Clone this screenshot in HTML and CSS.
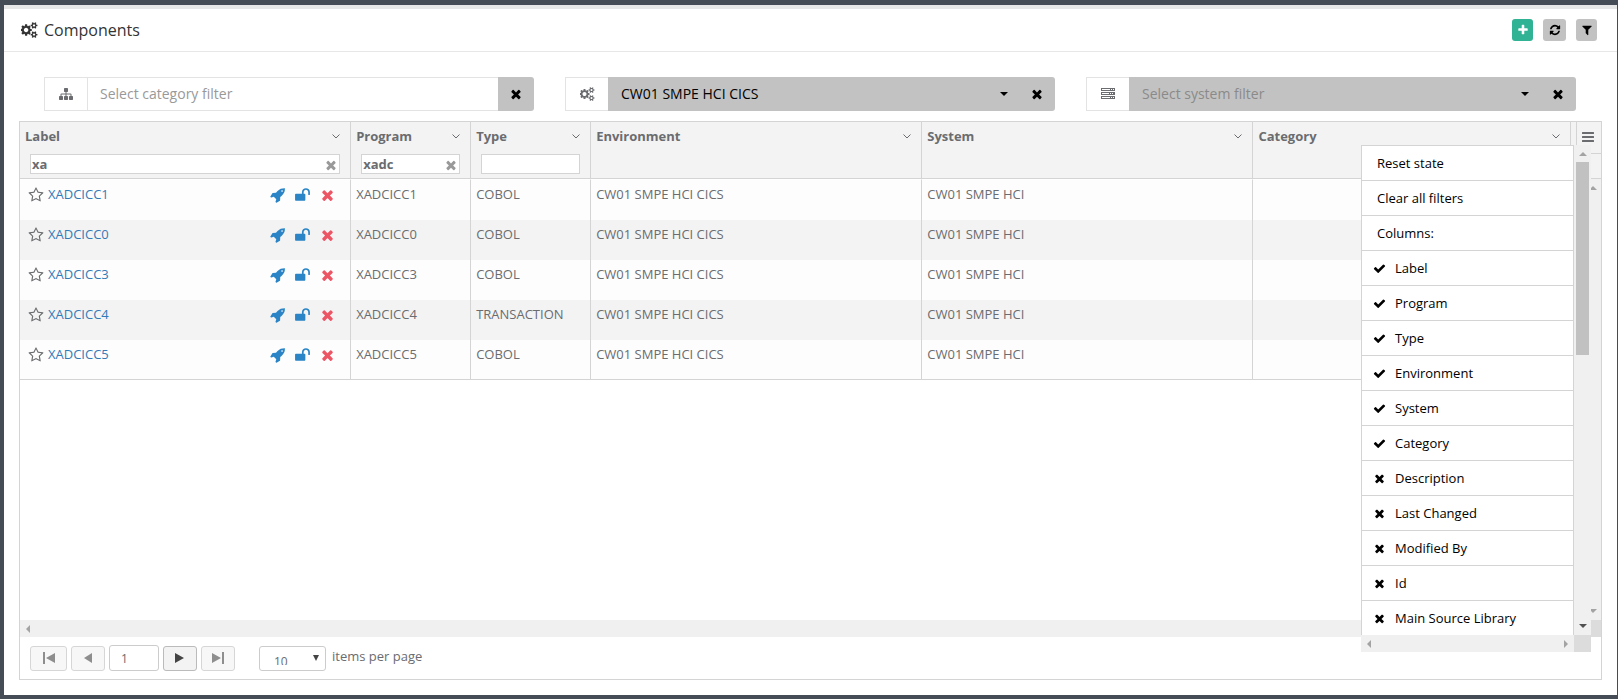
FILE: index.html
```html
<!DOCTYPE html>
<html lang="en">
<head>
<meta charset="utf-8">
<title>Components</title>
<link rel="stylesheet" href="styles.css">
</head>
<body>
<svg class="sprite" aria-hidden="true">
  <symbol id="i-cogs" viewBox="0 0 1920 1792"><path d="M832 896q0-106-75-181t-181-75-181 75-75 181 75 181 181 75 181-75 75-181zm768 512q0-52-38-90t-90-38-90 38-38 90q0 53 37.500 90.500t90.500 37.500 90.500-37.500 37.500-90.500zm0-1024q0-52-38-90t-90-38-90 38-38 90q0 53 37.500 90.500t90.500 37.500 90.500-37.500 37.500-90.500zm-384 421v185q0 10-7 19.500t-16 10.500l-155 24q-11 35-32 76 34 48 90 115 7 11 7 20 0 12-7 19-23 30-82.500 89.500t-78.500 59.500q-11 0-21-7l-115-90q-37 19-77 31-11 108-23 155-7 24-30 24h-186q-11 0-20-7.500t-10-17.500l-23-153q-34-10-75-31l-118 89q-7 7-20 7-11 0-21-8-144-133-144-160 0-9 7-19 10-14 41-53t47-61q-23-44-35-82l-152-24q-10-1-17-9.500t-7-19.500v-185q0-10 7-19.500t16-10.500l155-24q11-35 32-76-34-48-90-115-7-11-7-20 0-12 7-20 22-30 82-89t79-59q11 0 21 7l115 90q34-18 77-32 11-108 23-154 7-24 30-24h186q11 0 20 7.500t10 17.500l23 153q34 10 75 31l118-89q8-7 20-7 11 0 21 8 144 133 144 160 0 8-7 19-12 16-42 54t-45 60q23 48 34 82l152 23q10 2 17 10.500t7 19.500zm640 533v140q0 16-149 31-12 27-30 52 51 113 51 138 0 4-4 7-122 71-124 71-8 0-46-47t-52-68q-20 2-30 2t-30-2q-14 21-52 68t-46 47q-2 0-124-71-4-3-4-7 0-25 51-138-18-25-30-52-149-15-149-31v-140q0-16 149-31 13-29 30-52-51-113-51-138 0-4 4-7 4-2 35-20t59-34 30-16q8 0 46 46.500t52 67.500q20-2 30-2t30 2q51-71 92-112l6-2q4 0 124 70 4 3 4 7 0 25-51 138 17 23 30 52 149 15 149 31zm0-1024v140q0 16-149 31-12 27-30 52 51 113 51 138 0 4-4 7-122 71-124 71-8 0-46-47t-52-68q-20 2-30 2t-30-2q-14 21-52 68t-46 47q-2 0-124-71-4-3-4-7 0-25 51-138-18-25-30-52-149-15-149-31v-140q0-16 149-31 13-29 30-52-51-113-51-138 0-4 4-7 4-2 35-20t59-34 30-16q8 0 46 46.500t52 67.500q20-2 30-2t30 2q51-71 92-112l6-2q4 0 124 70 4 3 4 7 0 25-51 138 17 23 30 52 149 15 149 31z"/></symbol>
  <symbol id="i-sitemap" viewBox="0 0 1792 1792"><path d="M1792 1248v320q0 40-28 68t-68 28h-320q-40 0-68-28t-28-68v-320q0-40 28-68t68-28h96v-192h-512v192h96q40 0 68 28t28 68v320q0 40-28 68t-68 28h-320q-40 0-68-28t-28-68v-320q0-40 28-68t68-28h96v-192h-512v192h96q40 0 68 28t28 68v320q0 40-28 68t-68 28h-320q-40 0-68-28t-28-68v-320q0-40 28-68t68-28h96v-192q0-52 38-90t90-38h512v-192h-96q-40 0-68-28t-28-68v-320q0-40 28-68t68-28h320q40 0 68 28t28 68v320q0 40-28 68t-68 28h-96v192h512q52 0 90 38t38 90v192h96q40 0 68 28t28 68z"/></symbol>
  <symbol id="i-times" viewBox="0 0 1792 1792"><path d="M1490 1322q0 40-28 68l-136 136q-28 28-68 28t-68-28l-294-294-294 294q-28 28-68 28t-68-28l-136-136q-28-28-28-68t28-68l294-294-294-294q-28-28-28-68t28-68l136-136q28-28 68-28t68 28l294 294 294-294q28-28 68-28t68 28l136 136q28 28 28 68t-28 68l-294 294 294 294q28 28 28 68z"/></symbol>
  <symbol id="i-check" viewBox="0 0 1792 1792"><path d="M1671 566q0 40-28 68l-724 724-136 136q-28 28-68 28t-68-28l-136-136-362-362q-28-28-28-68t28-68l136-136q28-28 68-28t68 28l294 295 656-657q28-28 68-28t68 28l136 136q28 28 28 68z"/></symbol>
  <symbol id="i-plus" viewBox="0 0 1792 1792"><path d="M1600 736v192q0 40-28 68t-68 28h-416v416q0 40-28 68t-68 28h-192q-40 0-68-28t-28-68v-416h-416q-40 0-68-28t-28-68v-192q0-40 28-68t68-28h416v-416q0-40 28-68t68-28h192q40 0 68 28t28 68v416h416q40 0 68 28t28 68z"/></symbol>
  <symbol id="i-refresh" viewBox="0 0 1792 1792"><path d="M1639 1056q0 5-1 7-64 268-268 434.500t-478 166.500q-146 0-282.500-55t-243.500-157l-129 129q-19 19-45 19t-45-19-19-45v-448q0-26 19-45t45-19h448q26 0 45 19t19 45-19 45l-137 137q71 66 161 102t187 36q134 0 250-65t186-179q11-17 53-117 8-23 30-23h192q13 0 22.500 9.500t9.500 22.500zm25-800v448q0 26-19 45t-45 19h-448q-26 0-45-19t-19-45 19-45l138-138q-148-137-349-137-134 0-250 65t-186 179q-11 17-53 117-8 23-30 23h-199q-13 0-22.500-9.500t-9.500-22.500v-7q65-268 270-434.500t480-166.500q146 0 284 55.500t245 156.500l130-129q19-19 45-19t45 19 19 45z"/></symbol>
  <symbol id="i-filter" viewBox="0 0 1792 1792"><path d="M1595 295q17 41-14 70l-493 493v742q0 42-39 59-13 5-25 5-27 0-45-19l-256-256q-19-19-19-45v-486l-493-493q-31-29-14-70 17-39 59-39h1280q42 0 59 39z"/></symbol>
  <symbol id="i-rocket" viewBox="0 0 1792 1792"><path d="M1504 448q0-40-28-68t-68-28-68 28-28 68 28 68 68 28 68-28 28-68zm224-288q0 249-75.500 430.500t-253.500 360.500q-81 80-195 176l-20 379q-2 16-16 26l-384 224q-7 4-16 4-12 0-23-9l-64-64q-13-14-8-32l85-276-281-281-276 85q-3 1-9 1-14 0-23-9l-64-64q-17-19-5-39l224-384q10-14 26-16l379-20q96-114 176-195 188-187 358-258t431-71q14 0 24 9.500t10 22.500z"/></symbol>
  <symbol id="i-unlock" viewBox="0 0 1792 1792"><path d="M1728 576v256q0 26-19 45t-45 19h-64q-26 0-45-19t-19-45v-256q0-106-75-181t-181-75-181 75-75 181v192h96q40 0 68 28t28 68v576q0 40-28 68t-68 28h-960q-40 0-68-28t-28-68v-576q0-40 28-68t68-28h672v-192q0-185 131.500-316.500t316.500-131.500 316.500 131.500 131.500 316.500z"/></symbol>
  <symbol id="i-star" viewBox="0 0 1792 1792"><path d="M1201 1004l306-297-422-62-189-382-189 382-422 62 306 297-73 421 378-199 377 199zm527-357q0 22-26 48l-363 354 86 500q1 7 1 20 0 50-41 50-19 0-40-12l-449-236-449 236q-22 12-40 12-21 0-31.500-14.500t-10.500-35.500q0-6 2-20l86-500-364-354q-25-27-25-48 0-37 56-46l502-73 225-455q19-41 49-41t49 41l225 455 502 73q56 9 56 46z"/></symbol>
  <symbol id="i-bars" viewBox="0 0 12 10"><path d="M.5 0h11q.5 0 .5.500v1q0 .5-.5.500h-11q-.5 0-.5-.5v-1q0-.5.500-.5zM.5 4h11q.5 0 .5.500v1q0 .5-.5.500h-11q-.5 0-.5-.5v-1q0-.5.500-.5zM.5 8h11q.5 0 .5.500v1q0 .5-.5.500h-11q-.5 0-.5-.5v-1q0-.5.500-.5z"/></symbol>
  <symbol id="i-server" viewBox="0 0 14 12"><path fill-rule="evenodd" d="M0 0h14v3H0zM1 1v1h8V1zM10 1v1h1V1zM12 1v1h1V1zM0 4h14v3H0zM1 5v1h7V5zM9 5v1h1V5zM11 5v1h1V5zM0 8h14v3H0zM1 9v1h8V9zM10 9v1h1V9zM12 9v1h1V9z"/></symbol>
  <symbol id="i-chevron" viewBox="0 0 8 5"><path d="M.5.500 4 4 7.500.5" fill="none" stroke="currentColor"/></symbol>
  <symbol id="i-down" viewBox="0 0 8 4"><path d="M0 0h8L4 4z"/></symbol>
  <symbol id="i-drop" viewBox="0 0 6 6"><path d="M0 0h6L3 6z"/></symbol>
  <symbol id="i-up" viewBox="0 0 8 4"><path d="M0 4h8L4 0z"/></symbol>
  <symbol id="i-left" viewBox="0 0 4 8"><path d="M4 0v8L0 4z"/></symbol>
  <symbol id="i-right" viewBox="0 0 4 8"><path d="M0 0v8l4-4z"/></symbol>
  <symbol id="i-first" viewBox="0 0 12 12"><path d="M0 0h2v12H0zM12 1v10L3 6z"/></symbol>
  <symbol id="i-prev" viewBox="0 0 12 12"><path d="M10 1v10L2 6z"/></symbol>
  <symbol id="i-next" viewBox="0 0 12 12"><path d="M1 1v10l9-5z"/></symbol>
  <symbol id="i-last" viewBox="0 0 12 12"><path d="M10 0h2v12h-2zM0 1v10l9-5z"/></symbol>
</svg>

<main class="panel">
  <header class="panel-head">
    <h1 class="title"><svg class="icon title-icon"><use href="#i-cogs"/></svg>Components</h1>
    <div class="tools">
      <button class="tool tool-add" aria-label="Add"><svg class="icon"><use href="#i-plus"/></svg></button>
      <button class="tool tool-wide" aria-label="Refresh"><svg class="icon"><use href="#i-refresh"/></svg></button>
      <button class="tool" aria-label="Filter"><svg class="icon"><use href="#i-filter"/></svg></button>
    </div>
  </header>

  <section class="filters">
    <div class="group">
      <label class="addon" for="category" aria-label="Category filter"><svg class="icon"><use href="#i-sitemap"/></svg></label>
      <input class="group-input" id="category" type="text" placeholder="Select category filter">
      <button class="clear" aria-label="Clear category"><svg class="icon"><use href="#i-times"/></svg></button>
    </div>
    <div class="group">
      <span class="addon"><svg class="icon icon-cogs"><use href="#i-cogs"/></svg></span>
      <button class="picker"><span>CW01 SMPE HCI CICS</span><svg class="caret"><use href="#i-down"/></svg></button>
      <button class="clear" aria-label="Clear environment"><svg class="icon"><use href="#i-times"/></svg></button>
    </div>
    <div class="group">
      <span class="addon"><svg class="icon-server"><use href="#i-server"/></svg></span>
      <button class="picker picker-empty"><span>Select system filter</span><svg class="caret"><use href="#i-down"/></svg></button>
      <button class="clear" aria-label="Clear system"><svg class="icon"><use href="#i-times"/></svg></button>
    </div>
  </section>

  <section class="grid">
    <div class="viewport">
      <div class="table-area">
        <table class="table">
          <colgroup><col class="col-wide"><col class="col-narrow"><col class="col-narrow"><col class="col-wide"><col class="col-wide"><col></colgroup>
          <thead>
            <tr>
              <th><div class="th-top">Label<svg class="chevron"><use href="#i-chevron"/></svg></div><div class="th-filter"><input type="text" value="xa" aria-label="Filter label"><button class="th-clear" aria-label="Clear"><svg class="icon"><use href="#i-times"/></svg></button></div></th>
              <th><div class="th-top">Program<svg class="chevron"><use href="#i-chevron"/></svg></div><div class="th-filter"><input type="text" value="xadc" aria-label="Filter program"><button class="th-clear" aria-label="Clear"><svg class="icon"><use href="#i-times"/></svg></button></div></th>
              <th><div class="th-top">Type<svg class="chevron"><use href="#i-chevron"/></svg></div><div class="th-filter"><input type="text" aria-label="Filter type"></div></th>
              <th><div class="th-top">Environment<svg class="chevron"><use href="#i-chevron"/></svg></div></th>
              <th><div class="th-top">System<svg class="chevron"><use href="#i-chevron"/></svg></div></th>
              <th><div class="th-top">Category<svg class="chevron"><use href="#i-chevron"/></svg></div></th>
            </tr>
          </thead>
          <tbody>
            <tr><td><div class="label-cell"><svg class="star"><use href="#i-star"/></svg><a href="#">XADCICC1</a><span class="acts"><svg class="act"><use href="#i-rocket"/></svg><svg class="act"><use href="#i-unlock"/></svg><svg class="act act-del"><use href="#i-times"/></svg></span></div></td><td>XADCICC1</td><td>COBOL</td><td>CW01 SMPE HCI CICS</td><td>CW01 SMPE HCI</td><td></td></tr>
            <tr><td><div class="label-cell"><svg class="star"><use href="#i-star"/></svg><a href="#">XADCICC0</a><span class="acts"><svg class="act"><use href="#i-rocket"/></svg><svg class="act"><use href="#i-unlock"/></svg><svg class="act act-del"><use href="#i-times"/></svg></span></div></td><td>XADCICC0</td><td>COBOL</td><td>CW01 SMPE HCI CICS</td><td>CW01 SMPE HCI</td><td></td></tr>
            <tr><td><div class="label-cell"><svg class="star"><use href="#i-star"/></svg><a href="#">XADCICC3</a><span class="acts"><svg class="act"><use href="#i-rocket"/></svg><svg class="act"><use href="#i-unlock"/></svg><svg class="act act-del"><use href="#i-times"/></svg></span></div></td><td>XADCICC3</td><td>COBOL</td><td>CW01 SMPE HCI CICS</td><td>CW01 SMPE HCI</td><td></td></tr>
            <tr><td><div class="label-cell"><svg class="star"><use href="#i-star"/></svg><a href="#">XADCICC4</a><span class="acts"><svg class="act"><use href="#i-rocket"/></svg><svg class="act"><use href="#i-unlock"/></svg><svg class="act act-del"><use href="#i-times"/></svg></span></div></td><td>XADCICC4</td><td>TRANSACTION</td><td>CW01 SMPE HCI CICS</td><td>CW01 SMPE HCI</td><td></td></tr>
            <tr><td><div class="label-cell"><svg class="star"><use href="#i-star"/></svg><a href="#">XADCICC5</a><span class="acts"><svg class="act"><use href="#i-rocket"/></svg><svg class="act"><use href="#i-unlock"/></svg><svg class="act act-del"><use href="#i-times"/></svg></span></div></td><td>XADCICC5</td><td>COBOL</td><td>CW01 SMPE HCI CICS</td><td>CW01 SMPE HCI</td><td></td></tr>
          </tbody>
        </table>
      </div>
      <div class="gutter">
        <div class="gutter-head"><button class="menu-button" aria-label="Grid menu"><svg class="bars"><use href="#i-bars"/></svg></button></div>
        <div class="vbar"><svg class="tri-v"><use href="#i-up"/></svg><svg class="tri-v"><use href="#i-down"/></svg></div>
      </div>
    </div>
    <div class="hbar-row"><div class="hbar"><svg class="tri-h"><use href="#i-left"/></svg></div><div class="corner"></div></div>

    <footer class="pager">
      <button class="page-btn page-btn-first" disabled aria-label="First page"><svg><use href="#i-first"/></svg></button>
      <button class="page-btn" disabled aria-label="Previous page"><svg><use href="#i-prev"/></svg></button>
      <input class="page-input" type="text" value="1" aria-label="Page">
      <button class="page-btn" aria-label="Next page"><svg><use href="#i-next"/></svg></button>
      <button class="page-btn" disabled aria-label="Last page"><svg><use href="#i-last"/></svg></button>
      <span class="size-wrap"><select class="page-size" id="size"><option>10</option></select><svg class="size-arrow"><use href="#i-drop"/></svg></span>
      <label class="size-label" for="size">items per page</label>
    </footer>

    <div class="menu">
      <ul class="menu-list">
        <li><button class="item item-plain">Reset state</button></li>
        <li><button class="item item-plain">Clear all filters</button></li>
        <li><button class="item item-plain">Columns:</button></li>
        <li><button class="item"><svg class="icon"><use href="#i-check"/></svg>Label</button></li>
        <li><button class="item"><svg class="icon"><use href="#i-check"/></svg>Program</button></li>
        <li><button class="item"><svg class="icon"><use href="#i-check"/></svg>Type</button></li>
        <li><button class="item"><svg class="icon"><use href="#i-check"/></svg>Environment</button></li>
        <li><button class="item"><svg class="icon"><use href="#i-check"/></svg>System</button></li>
        <li><button class="item"><svg class="icon"><use href="#i-check"/></svg>Category</button></li>
        <li><button class="item"><svg class="icon"><use href="#i-times"/></svg>Description</button></li>
        <li><button class="item"><svg class="icon"><use href="#i-times"/></svg>Last Changed</button></li>
        <li><button class="item"><svg class="icon"><use href="#i-times"/></svg>Modified By</button></li>
        <li><button class="item"><svg class="icon"><use href="#i-times"/></svg>Id</button></li>
        <li><button class="item"><svg class="icon"><use href="#i-times"/></svg>Main Source Library</button></li>
      </ul>
      <div class="menu-vbar"><svg class="tri-v"><use href="#i-up"/></svg><div class="thumb"></div><svg class="tri-v tri-dark"><use href="#i-down"/></svg></div>
      <div class="menu-hbar"><svg class="tri-h"><use href="#i-left"/></svg><svg class="tri-h"><use href="#i-right"/></svg></div>
      <div class="corner"></div>
    </div>
  </section>
</main>
</body>
</html>
```

FILE: styles.css
```css
* { box-sizing: border-box; }

body {
  margin: 0;
  min-height: 100vh;
  display: flex;
  padding: 5px 1px 4px 4px;
  background: #464c56;
  color: #6a6c6f;
  font: 13px/18px "Open Sans", sans-serif;
}

button, input, select {
  margin: 0;
  padding: 0;
  border: 0;
  border-radius: 0;
  font: inherit;
  color: inherit;
  background: none;
}

svg { display: block; flex: none; fill: currentColor; }
.sprite { position: absolute; width: 0; height: 0; }
.icon { width: 14px; height: 14px; }

.panel {
  flex: 1;
  min-width: 0;
  display: flex;
  flex-direction: column;
  padding-bottom: 15px;
  border-top: 4px solid #e7e7e7;
  background: #fff;
}

.panel-head {
  display: flex;
  align-items: center;
  justify-content: space-between;
  height: 43px;
  padding: 0 20px 0 17px;
  border-bottom: 1px solid #e7e7e7;
}
.title {
  display: flex;
  align-items: center;
  gap: 6px;
  margin: 0;
  color: #333;
  font-size: 16px;
  font-weight: 400;
  line-height: 22px;
}
.title-icon { width: 17px; height: 16px; }

.tools { display: flex; gap: 10px; }
.tool {
  display: flex;
  align-items: center;
  justify-content: center;
  width: 21px;
  height: 22px;
  border-radius: 3px;
  background: #c2c2c2;
  color: #000;
}
.tool .icon { width: 12px; height: 12px; }
.tool-wide { width: 23px; }
.tool-add { background: #2fb394; color: #fff; }

.filters {
  display: grid;
  grid-template-columns: repeat(3, 1fr);
  gap: 31px;
  padding: 25px 41px 10px 40px;
}
.group { display: flex; height: 34px; font-size: 14px; line-height: 20px; }
.addon {
  display: flex;
  align-items: center;
  justify-content: center;
  width: 43px;
  border: 1px solid #e3e3e3;
  border-right: 0;
}
.icon-cogs { width: 15px; }
.icon-server { width: 14px; height: 12px; }
.group-input {
  flex: 1;
  min-width: 0;
  padding: 0 12px;
  border: 1px solid #e3e3e3;
  border-right: 0;
}
.group-input::placeholder { color: #999; opacity: 1; }
.picker {
  flex: 1;
  display: flex;
  align-items: center;
  justify-content: space-between;
  padding: 0 11px 0 13px;
  background: #c2c2c2;
  color: #000;
}
.picker-empty span { color: #8a8a8a; }
.caret { width: 8px; height: 4px; }
.clear {
  display: flex;
  align-items: center;
  justify-content: center;
  width: 36px;
  border-radius: 0 3px 3px 0;
  background: #c2c2c2;
  color: #000;
}

.grid {
  position: relative;
  flex: 1;
  display: flex;
  flex-direction: column;
  margin: 0 15px;
  border: 1px solid #d4d4d4;
}
.viewport { flex: 1; display: flex; }
.table-area { flex: 1; min-width: 0; }
.table {
  width: 100%;
  table-layout: fixed;
  border-collapse: separate;
  border-spacing: 0;
  border-bottom: 1px solid #d4d4d4;
}
.col-wide { width: 21.35%; }
.col-narrow { width: 120px; }

th {
  height: 57px;
  padding: 0;
  border-right: 1px solid #d4d4d4;
  border-bottom: 1px solid #d4d4d4;
  background: #f3f3f3;
  text-align: left;
  vertical-align: top;
}
.th-top {
  display: flex;
  align-items: center;
  justify-content: space-between;
  height: 28px;
  padding: 0 10px 0 5px;
}
.chevron { width: 8px; height: 5px; }
.th-filter { display: flex; position: relative; padding: 4px 10px 0; }
.th-filter input {
  flex: 1;
  min-width: 0;
  height: 20px;
  padding: 0 20px 0 1px;
  border: 1px solid #d4d4d4;
  background: #fff;
}
.th-clear { position: absolute; top: 8px; right: 12px; color: #999; }
.th-clear .icon { width: 14px; height: 14px; }

td {
  height: 40px;
  padding: 5px 5px 6px;
  border-right: 1px solid #d4d4d4;
  background: #fdfdfd;
  vertical-align: top;
}
tbody tr:nth-child(even) td { background: #f3f3f3; }
tbody tr:first-child td { height: 41px; border-top: 1px solid #fff; }
tbody tr:last-child td { height: 39px; }
.label-cell { display: flex; align-items: flex-end; padding: 0 9px 0 3px; }
.label-cell a { margin-left: 4px; color: #337ab7; text-decoration: none; }
.star { width: 16px; height: 16px; }
.acts { display: flex; gap: 8px; margin-left: auto; }
.act { width: 17px; height: 16px; color: #2a84c6; }
.act-del { color: #ed5565; }

.gutter { width: 30px; display: flex; flex-direction: column; }
.gutter-head {
  height: 57px;
  padding-left: 5px;
  border-bottom: 1px solid #d4d4d4;
  background: #f3f3f3;
}
.menu-button {
  display: flex;
  align-items: center;
  justify-content: center;
  width: 25px;
  height: 32px;
  padding: 0 2px 2px 0;
  border-left: 1px solid #d4d4d4;
  border-bottom: 1px solid #d4d4d4;
}
.bars { width: 12px; height: 10px; }
.vbar {
  flex: 1;
  display: flex;
  flex-direction: column;
  justify-content: space-between;
  align-items: center;
  padding: 7px 0 7px 13px;
  background: #f0f0f0;
  color: #a3a3a3;
}
.tri-v { width: 8px; height: 4px; }
.tri-h { width: 4px; height: 8px; }
.tri-dark { color: #505050; }

.hbar-row { display: flex; height: 17px; }
.hbar {
  flex: 1;
  display: flex;
  align-items: center;
  padding-left: 6px;
  background: #f0f0f0;
  color: #a3a3a3;
}
.corner { width: 17px; background: #dcdcdc; }

.pager { display: flex; align-items: center; gap: 4px; height: 42px; padding: 0 10px; }
.page-btn {
  display: flex;
  align-items: center;
  justify-content: center;
  width: 34px;
  height: 25px;
  border: 1px solid #bbb;
  border-radius: 3px;
  background: #f3f3f3;
  color: #444;
}
.page-btn:disabled { opacity: 0.6; }
.page-btn-first { width: 37px; }
.page-btn svg { width: 12px; height: 12px; }
.page-input {
  width: 50px;
  height: 26px;
  padding: 0 11px;
  border: 1px solid #ccc;
  border-radius: 3px;
  font-size: 12px;
}
.size-wrap { position: relative; margin-left: 20px; }
.page-size {
  display: block;
  width: 67px;
  height: 25px;
  padding: 6px 14px 5px;
  border: 1px solid #ccc;
  border-radius: 3px;
  appearance: none;
  font-size: 12px;
}
.size-arrow { position: absolute; top: 9px; right: 7px; width: 6px; height: 6px; color: #444; }
.size-label { margin: 0 0 4px 2px; }

.menu {
  position: absolute;
  top: 23px;
  right: 10px;
  display: grid;
  grid-template-columns: 213px 17px;
  grid-template-rows: auto 17px;
  color: #000;
}
.menu-list {
  margin: 0;
  padding: 0;
  list-style: none;
  border-left: 1px solid #d4d4d4;
  border-right: 1px solid #d4d4d4;
  background: #fff;
}
.item {
  display: flex;
  align-items: center;
  gap: 9px;
  width: 100%;
  height: 35px;
  padding: 0 10px 0 11px;
  border-top: 1px solid #d4d4d4;
}
.item .icon { width: 13px; height: 13px; }
.item-plain { padding: 0 15px; }
.menu-vbar {
  display: flex;
  flex-direction: column;
  align-items: center;
  padding: 7px 0;
  background: #f0f0f0;
  color: #a3a3a3;
}
.thumb { width: 13px; height: 193px; margin: 6px 0 auto; background: #c1c1c1; }
.menu-hbar {
  display: flex;
  align-items: center;
  justify-content: space-between;
  padding: 0 6px;
  background: #f0f0f0;
  color: #a3a3a3;
}
```
